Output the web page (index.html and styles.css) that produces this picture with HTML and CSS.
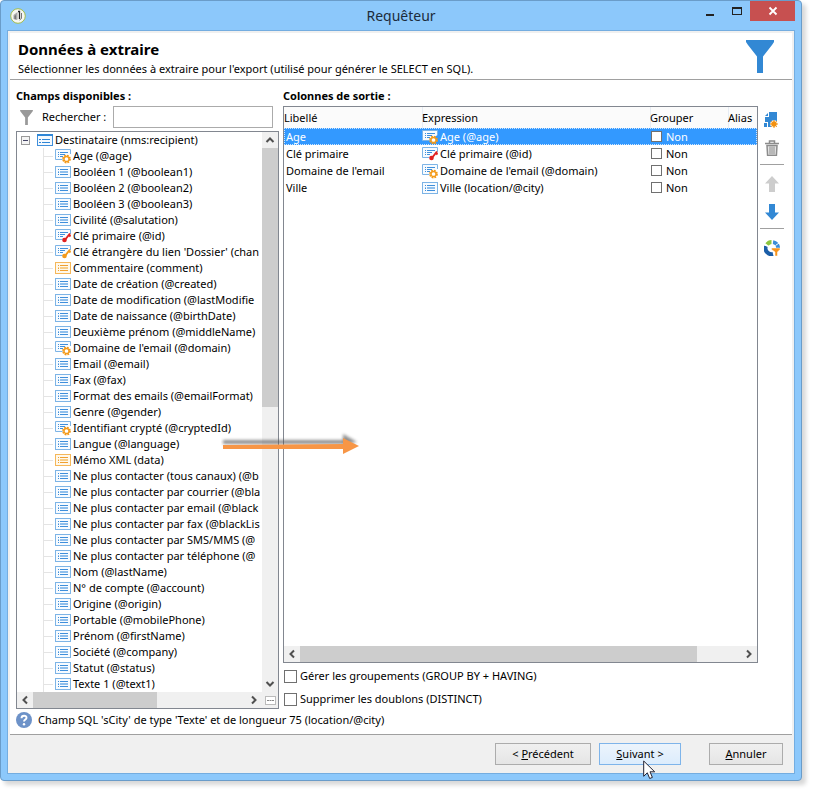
FILE: index.html
```html
<!DOCTYPE html>
<html lang="fr">
<head>
<meta charset="utf-8">
<title>Requêteur</title>
<link rel="stylesheet" href="styles.css">
</head>
<body>
<svg class="sprite" aria-hidden="true">
  <defs>
    <symbol id="field" viewBox="0 0 16 16">
      <rect x=".5" y="2.500" width="15" height="11" fill="#f7fbff" stroke="#7db4e6"/>
      <path d="M3 5.500h1M3 8.500h1M3 10.500h1M5 5.500h8M5 10.500h8" stroke="#3f8fdb"/>
      <path d="M3 7.500h1M5 7.500h8M5 8.500h8" stroke="#8fbfec"/>
    </symbol>
    <symbol id="memo" viewBox="0 0 16 16">
      <rect x=".5" y="2.500" width="15" height="11" fill="#fff8ea" stroke="#f5b75a"/>
      <path d="M3 5.500h1M3 8.500h1M3 10.500h1M5 5.500h8M5 10.500h8" stroke="#f0a030"/>
      <path d="M3 7.500h1M5 7.500h8M5 8.500h8" stroke="#f7cd88"/>
    </symbol>
    <symbol id="cut" viewBox="0 0 16 16">
      <path d="M15.500 6V1.500H.5v10h7" fill="#f7fbff" stroke="#7db4e6"/>
      <path d="M3 4.500h1M3 6.500h1M3 8.500h1M5 4.500h8M5 6.500h5M5 8.500h3" stroke="#3f8fdb"/>
    </symbol>
    <symbol id="calc" viewBox="0 0 16 16">
      <use href="#cut"/>
      <circle cx="11.500" cy="11" r="3.400" fill="none" stroke="#f39a1a" stroke-width="2" stroke-dasharray="1.700 .970"/>
      <circle cx="11.500" cy="11" r="2.500" fill="#fff" stroke="#f39a1a" stroke-width="1.300"/>
    </symbol>
    <symbol id="pkey" viewBox="0 0 16 16">
      <use href="#cut"/>
      <path d="M9.500 12.500L15 5.500M14 7l1.500 1.500" fill="none" stroke="#e02020" stroke-width="2"/>
      <circle cx="9.500" cy="12" r="2.300" fill="#e02020"/>
    </symbol>
    <symbol id="fkey" viewBox="0 0 16 16">
      <use href="#cut"/>
      <path d="M9.500 12.500L15 5.500M14 7l1.500 1.500" fill="none" stroke="#f39a1a" stroke-width="2"/>
      <circle cx="9.500" cy="12" r="2.300" fill="#f39a1a"/>
    </symbol>
    <symbol id="schema" viewBox="0 0 16 16">
      <rect x=".5" y="2.500" width="15" height="11" fill="#f4f9fe" stroke="#3f8fdb"/>
      <path d="M0 3h16" stroke="#2f86d6" stroke-width="2"/>
      <path d="M2 7.500h2M2 10.500h2M5 7.500h8M5 10.500h8" stroke="#2f86d6"/>
    </symbol>
    <symbol id="chev" viewBox="0 0 16 16">
      <path d="M4.500 10L8 6.500l3.500 3.500" fill="none" stroke="#505050" stroke-width="2"/>
    </symbol>
    <symbol id="funnel" viewBox="0 0 28 33">
      <path d="M0 0h28v2l-2 3-9 11.500V33h-6V16.500L2 5 0 2z" fill="currentColor"/>
    </symbol>
  </defs>
</svg>

<main class="window">
  <header class="titlebar">
    <svg class="app-icon" viewBox="0 0 16 16" aria-hidden="true">
      <circle cx="8" cy="8" r="7.300" fill="#f7f7f2" stroke="#a3bd4c"/>
      <path d="M3.500 7l4-3v7.500l-1.500.5-2.500-1z" fill="#a8a8a8"/>
      <path d="M4.500 8l1.500-1v4H4.500z" fill="#777"/>
      <path d="M8 3.500h1.500V11" stroke="#222" fill="none" stroke-width="1.300"/>
      <path d="M11.500 5v5.500l-2 1.500" stroke="#777" fill="none"/>
    </svg>
    <h1 class="caption">Requêteur</h1>
    <div class="winbuttons">
      <button class="winbtn" aria-label="Réduire"><svg viewBox="0 0 12 10"><path d="M2 9h8" stroke="#222" stroke-width="2"/></svg></button>
      <button class="winbtn" aria-label="Agrandir"><svg viewBox="0 0 12 10"><path d="M1 1.500h10M1.500 1v7.500M10.500 1v7.500M1 8.500h10" stroke="#222" stroke-width="1"/><path d="M1 2h10" stroke="#222" stroke-width="2"/></svg></button>
      <button class="winbtn close" aria-label="Fermer"><svg viewBox="0 0 12 10"><path d="M2.500 1.500l7 7M9.500 1.500l-7 7" stroke="#fff" stroke-width="1.800"/></svg></button>
    </div>
  </header>

  <div class="client">
    <section class="banner">
      <div>
        <h2 class="title">Données à extraire</h2>
        <p class="subtitle">Sélectionner les données à extraire pour l'export (utilisé pour générer le SELECT en SQL).</p>
      </div>
      <svg class="banner-icon" aria-hidden="true"><use href="#funnel"/></svg>
    </section>

    <div class="content">
      <div class="columns">
        <section class="fields">
          <h3 class="heading">Champs disponibles :</h3>
          <div class="search">
            <svg class="search-icon" aria-hidden="true"><use href="#funnel"/></svg>
            <label for="search">Rechercher :</label>
            <input id="search" class="search-input" type="text">
          </div>
          <div class="tree-box">
            <div class="tree">
              <div class="root"><button class="toggle" aria-label="Replier"></button><svg class="ico"><use href="#schema"/></svg>Destinataire (nms:recipient)</div>
              <ul class="nodes">
                <li><svg class="ico"><use href="#calc"/></svg>Age (@age)</li>
                <li><svg class="ico"><use href="#field"/></svg>Booléen 1 (@boolean1)</li>
                <li><svg class="ico"><use href="#field"/></svg>Booléen 2 (@boolean2)</li>
                <li><svg class="ico"><use href="#field"/></svg>Booléen 3 (@boolean3)</li>
                <li><svg class="ico"><use href="#field"/></svg>Civilité (@salutation)</li>
                <li><svg class="ico"><use href="#pkey"/></svg>Clé primaire (@id)</li>
                <li><svg class="ico"><use href="#fkey"/></svg>Clé étrangère du lien 'Dossier' (chan</li>
                <li><svg class="ico"><use href="#memo"/></svg>Commentaire (comment)</li>
                <li><svg class="ico"><use href="#field"/></svg>Date de création (@created)</li>
                <li><svg class="ico"><use href="#field"/></svg>Date de modification (@lastModifie</li>
                <li><svg class="ico"><use href="#field"/></svg>Date de naissance (@birthDate)</li>
                <li><svg class="ico"><use href="#field"/></svg>Deuxième prénom (@middleName)</li>
                <li><svg class="ico"><use href="#calc"/></svg>Domaine de l'email (@domain)</li>
                <li><svg class="ico"><use href="#field"/></svg>Email (@email)</li>
                <li><svg class="ico"><use href="#field"/></svg>Fax (@fax)</li>
                <li><svg class="ico"><use href="#field"/></svg>Format des emails (@emailFormat)</li>
                <li><svg class="ico"><use href="#field"/></svg>Genre (@gender)</li>
                <li><svg class="ico"><use href="#calc"/></svg>Identifiant crypté (@cryptedId)</li>
                <li><svg class="ico"><use href="#field"/></svg>Langue (@language)</li>
                <li><svg class="ico"><use href="#memo"/></svg>Mémo XML (data)</li>
                <li><svg class="ico"><use href="#field"/></svg>Ne plus contacter (tous canaux) (@b</li>
                <li><svg class="ico"><use href="#field"/></svg>Ne plus contacter par courrier (@bla</li>
                <li><svg class="ico"><use href="#field"/></svg>Ne plus contacter par email (@black</li>
                <li><svg class="ico"><use href="#field"/></svg>Ne plus contacter par fax (@blackLis</li>
                <li><svg class="ico"><use href="#field"/></svg>Ne plus contacter par SMS/MMS (@</li>
                <li><svg class="ico"><use href="#field"/></svg>Ne plus contacter par téléphone (@</li>
                <li><svg class="ico"><use href="#field"/></svg>Nom (@lastName)</li>
                <li><svg class="ico"><use href="#field"/></svg>N° de compte (@account)</li>
                <li><svg class="ico"><use href="#field"/></svg>Origine (@origin)</li>
                <li><svg class="ico"><use href="#field"/></svg>Portable (@mobilePhone)</li>
                <li><svg class="ico"><use href="#field"/></svg>Prénom (@firstName)</li>
                <li><svg class="ico"><use href="#field"/></svg>Société (@company)</li>
                <li><svg class="ico"><use href="#field"/></svg>Statut (@status)</li>
                <li><svg class="ico"><use href="#field"/></svg>Texte 1 (@text1)</li>
              </ul>
            </div>
            <div class="vbar">
              <svg class="ico"><use href="#chev"/></svg>
              <div class="vtrack"><div class="vthumb"></div></div>
              <svg class="ico down"><use href="#chev"/></svg>
            </div>
            <div class="hbar">
              <svg class="ico left"><use href="#chev"/></svg>
              <div class="htrack"><div class="hthumb tree-thumb"></div></div>
              <svg class="ico right"><use href="#chev"/></svg>
            </div>
            <button class="more" aria-label="Plus"><svg viewBox="0 0 11 9"><rect x=".5" y=".5" width="10" height="8" fill="#fff" stroke="#bbb"/><path d="M2 4.500h2M4.500 4.500h2M7 4.500h2" stroke="#888"/></svg></button>
          </div>
        </section>

        <section class="output">
          <h3 class="heading">Colonnes de sortie :</h3>
          <div class="table-box">
            <table class="grid">
              <colgroup><col class="c-label"><col class="c-expr"><col class="c-group"><col></colgroup>
              <thead><tr><th>Libellé</th><th>Expression</th><th>Grouper</th><th>Alias</th></tr></thead>
              <tbody>
                <tr class="selected"><td>Age</td><td><span class="cell"><svg class="ico"><use href="#calc"/></svg>Age (@age)</span></td><td><label class="cell"><input class="check small" type="checkbox">Non</label></td><td></td></tr>
                <tr><td>Clé primaire</td><td><span class="cell"><svg class="ico"><use href="#pkey"/></svg>Clé primaire (@id)</span></td><td><label class="cell"><input class="check small" type="checkbox">Non</label></td><td></td></tr>
                <tr><td>Domaine de l'email</td><td><span class="cell"><svg class="ico"><use href="#calc"/></svg>Domaine de l'email (@domain)</span></td><td><label class="cell"><input class="check small" type="checkbox">Non</label></td><td></td></tr>
                <tr><td>Ville</td><td><span class="cell"><svg class="ico"><use href="#field"/></svg>Ville (location/@city)</span></td><td><label class="cell"><input class="check small" type="checkbox">Non</label></td><td></td></tr>
              </tbody>
            </table>
            <div class="hbar">
              <svg class="ico left"><use href="#chev"/></svg>
              <div class="htrack"><div class="hthumb grid-thumb"></div></div>
              <svg class="ico right"><use href="#chev"/></svg>
            </div>
          </div>
          <label class="option"><input class="check" type="checkbox">Gérer les groupements (GROUP BY + HAVING)</label>
          <label class="option"><input class="check" type="checkbox">Supprimer les doublons (DISTINCT)</label>
        </section>

        <nav class="tools" aria-label="Outils">
          <button class="tool" aria-label="Ajouter"><svg viewBox="0 0 16 16"><path d="M5 0h8v15H4v-5H1V5h4z" fill="#3288d4"/><path d="M1 4L4 1v3z" fill="#3288d4"/><path d="M0 11h3v4H0z" fill="#3288d4"/><circle cx="10" cy="12" r="3.800" fill="#fff"/><circle cx="10" cy="12" r="2.700" fill="#f29111"/><path d="M10 8v8M6 12h8M7.200 9.200l5.600 5.600M12.800 9.200l-5.600 5.600" stroke="#f29111"/></svg></button>
          <button class="tool" aria-label="Supprimer"><svg viewBox="0 0 16 16"><path d="M1 3.500h14M5.500 3V1h5v2" fill="none" stroke="#8c8c8c" stroke-width="1.500"/><path d="M3 5.500h10l-.6 10H3.600z" fill="#e4e4e4" stroke="#8c8c8c" stroke-width="1.500"/><path d="M6 6.500v8M8 6.500v8M10 6.500v8" stroke="#8c8c8c"/></svg></button>
          <hr class="rule">
          <button class="tool" aria-label="Monter"><svg viewBox="0 0 16 16"><path d="M8 0l7 7.500h-4V16H5V7.500H1z" fill="#cdcdcd"/></svg></button>
          <button class="tool" aria-label="Descendre"><svg viewBox="0 0 16 16"><path d="M8 16L1 8.500h4V0h6v8.500h4z" fill="#3288d4"/></svg></button>
          <hr class="rule">
          <button class="tool" aria-label="Répartition"><svg viewBox="0 0 16 16"><g fill="none" stroke-width="4"><path d="M9 2.100A6 6 0 0 1 14 8.500" stroke="#3b8dd8"/><path d="M1.900 6A6 6 0 0 0 9 14" stroke="#1b5ea8"/><path d="M3 4.500A6 6 0 0 1 8 2" stroke="#8cc63f"/></g><path d="M8 0v4.500M0 5l5 1.500M11.500 5.500L15 3" stroke="#fff"/><path d="M7.500 8H16v1.500l-2.500 2.500v4h-2.500v-4L7.500 9.500z" fill="#f7941d" stroke="#fff" stroke-width=".5"/></svg></button>
        </nav>
      </div>
      <p class="status"><svg class="help" viewBox="0 0 16 16" aria-hidden="true"><circle cx="8" cy="8" r="8" fill="#6d92c8"/><path d="M5.500 6.200C5.500 2.800 10.800 3 10.500 6c-.1 1.600-2.500 1.600-2.500 3.600" fill="none" stroke="#fff" stroke-width="1.900"/><circle cx="8" cy="12.200" r="1.200" fill="#fff"/></svg>Champ SQL 'sCity' de type 'Texte' et de longueur 75 (location/@city)</p>
    </div>

    <footer class="footer">
      <button class="btn prev">&lt; <u>P</u>récédent</button>
      <div class="next-wrap">
        <button class="btn next"><u>S</u>uivant &gt;</button>
        <svg class="cursor" viewBox="0 0 12 20" aria-hidden="true"><path d="M.7 1v15.300l3.600-3.500 2.400 5.700 2.700-1.100-2.400-5.600h4.700z" fill="#fff" stroke="#223" stroke-width="1"/></svg>
      </div>
      <button class="btn cancel"><u>A</u>nnuler</button>
    </footer>
  </div>

  <svg class="drag-arrow" viewBox="0 0 146 32" aria-hidden="true">
    <defs><filter id="soft" x="-10%" y="-50%" width="120%" height="200%"><feGaussianBlur stdDeviation="1.500"/></filter></defs>
    <path d="M2 10h120V4l14 8-14 3v-1H2z" fill="#555" opacity=".65" filter="url(#soft)"/>
    <path d="M2 15l120-1V8l16 8-16 8v-5L2 19z" fill="#f79646"/>
  </svg>
</main>
</body>
</html>
```
FILE: styles.css
```css
* { box-sizing: border-box; }

body {
  margin: 0;
  background: #fff;
  color: #000;
  font: 11px/16px "Noto Sans", "Open Sans", sans-serif;
}

h1, h2, h3, p, ul { margin: 0; padding: 0; font-size: inherit; }
ul { list-style: none; }
button, input { font: inherit; color: inherit; margin: 0; }
button { padding: 0; border: 0; background: none; }
svg { display: block; flex: none; }

.sprite { position: absolute; width: 0; height: 0; }
.ico { width: 16px; height: 16px; }

.window {
  position: relative;
  margin: 0 12px 9px 0;
  padding: 0 6px 6px;
  border: 1px solid #6a9cc9;
  border-radius: 4px;
  background: #8cc8fb;
  box-shadow: 4px 4px 4px #d8d8d8;
}

/* Title bar */
.titlebar { display: flex; align-items: center; height: 29px; padding-left: 3px; }
.app-icon { width: 16px; height: 16px; }
.caption { flex: 1; padding-left: 80px; text-align: center; font-size: 14px; font-weight: 400; color: #1c2c3c; }
.winbuttons { display: flex; align-self: flex-start; }
.winbtn { display: flex; align-items: center; justify-content: center; width: 27px; height: 20px; }
.winbtn svg { width: 12px; height: 10px; }
.winbtn.close { width: 45px; background: #c75050; }

/* Client area */
.client { padding: 2px 2px 0; border: 1px solid #74ade0; background: #f0f0f0; }
.banner {
  display: flex;
  justify-content: space-between;
  padding: 7px 18px 2px 8px;
  border-bottom: 1px solid #a0a0a0;
  background: #fff;
}
.title { font-size: 15px; line-height: 18px; }
.subtitle { margin-top: 3px; }
.banner-icon { width: 28px; height: 33px; color: #3288d4; }
.content { padding: 8px 8px 6px 6px; background: #fff; }
.columns { display: flex; gap: 4px; }
.heading { font-weight: 700; line-height: 16px; }

/* Available fields */
.fields { flex: 0 0 263px; min-width: 0; }
.search { display: flex; align-items: center; padding: 2px 6px 3px 4px; }
.search-icon { width: 13px; height: 15px; margin-right: 9px; color: #999; }
.search-input { flex: 0 0 160px; min-width: 0; height: 22px; margin-left: auto; border: 1px solid #ababab; background: #fff; }
.tree-box {
  display: grid;
  grid-template-columns: 1fr 16px;
  grid-template-rows: auto 16px;
  border: 1px solid #828790;
}
.tree { min-width: 0; overflow: hidden; white-space: nowrap; }
.root { display: flex; gap: 2px; padding-left: 4px; }
.toggle {
  width: 9px;
  height: 9px;
  margin: 4px 5px 0 0;
  border: 1px solid #999;
  background: linear-gradient(#446, #446) center / 5px 1px no-repeat #f4f4f4;
}
.nodes { margin-left: 26px; border-left: 1px solid #e4e4e4; }
.nodes li { display: flex; gap: 2px; }
.nodes li::before { content: ""; flex: none; width: 9px; height: 8px; border-bottom: 1px solid #e4e4e4; }

/* Scroll bars */
.vbar { display: flex; flex-direction: column; background: #f0f0f0; }
.vtrack { flex: 1; }
.vthumb { height: 49%; background: #cdcdcd; }
.hbar { display: flex; height: 16px; background: #f0f0f0; }
.htrack { flex: 1; }
.hthumb { height: 100%; background: #cdcdcd; }
.tree-thumb { width: 58%; }
.grid-thumb { width: 90%; }
.down { transform: rotate(180deg); }
.left { transform: rotate(-90deg); }
.right { transform: rotate(90deg); }
.more { display: flex; align-items: center; justify-content: center; background: #f0f0f0; }
.more svg { width: 11px; height: 9px; }

/* Output columns */
.output { flex: 1; min-width: 0; display: flex; flex-direction: column; }
.table-box {
  flex: 1;
  display: flex;
  flex-direction: column;
  justify-content: space-between;
  margin: 2px 0 5px;
  border: 1px solid #828790;
}
.grid { width: 100%; table-layout: fixed; border-collapse: collapse; white-space: nowrap; }
.c-label { width: 138px; }
.c-expr { width: 228px; }
.c-group { width: 78px; }
.grid th { height: 21px; padding: 0; background: #fbfbfb; font-weight: 400; text-align: left; }
.grid th + th { box-shadow: inset 1px 0 #e6ecf4; }
.grid td { height: 17px; padding: 0; line-height: 17px; }
.grid td:first-child { padding-left: 2px; }
.cell { display: flex; align-items: center; gap: 2px; height: 17px; }
label.cell { gap: 4px; padding-left: 1px; }
.selected { background: #3399ff; color: #fff; outline: 1px dotted #cfe6ff; outline-offset: -1px; }
.check { appearance: none; width: 13px; height: 13px; border: 1px solid #707070; background: #fff; }
.check.small { width: 11px; height: 11px; }
.option { display: flex; align-items: center; gap: 3px; height: 16px; margin-left: 1px; }
.option + .option { margin-top: 7px; }
.option:last-child { margin-bottom: 2px; }

/* Side tools */
.tools { display: flex; flex-direction: column; align-items: center; width: 24px; margin-left: -2px; padding-top: 24px; }
.tool svg { width: 16px; height: 16px; }
.tool + .tool { margin-top: 12px; }
.rule { width: 24px; height: 1px; margin: 8px 0 11px; border: 0; background: #a0a0a0; }

/* Status and footer */
.status { display: flex; gap: 6px; margin-top: 3px; }
.help { width: 16px; height: 16px; }
.footer {
  display: flex;
  justify-content: flex-end;
  padding: 8px 9px;
  border-top: 1px solid #a0a0a0;
}
.btn { height: 22px; border: 1px solid #acacac; background: linear-gradient(#f0f0f0, #e5e5e5); }
.prev { width: 96px; }
.next { width: 82px; border-color: #7eb4ea; background: linear-gradient(#ecf4fc, #dcecfc); }
.cancel { width: 74px; }
.next-wrap { position: relative; margin: 0 28px 0 8px; }
.cursor { position: absolute; left: 44px; top: 17px; width: 12px; height: 20px; }

/* Drag gesture from the tree to the output list */
.drag-arrow { position: absolute; left: 220px; top: 429px; width: 146px; height: 32px; }
```
